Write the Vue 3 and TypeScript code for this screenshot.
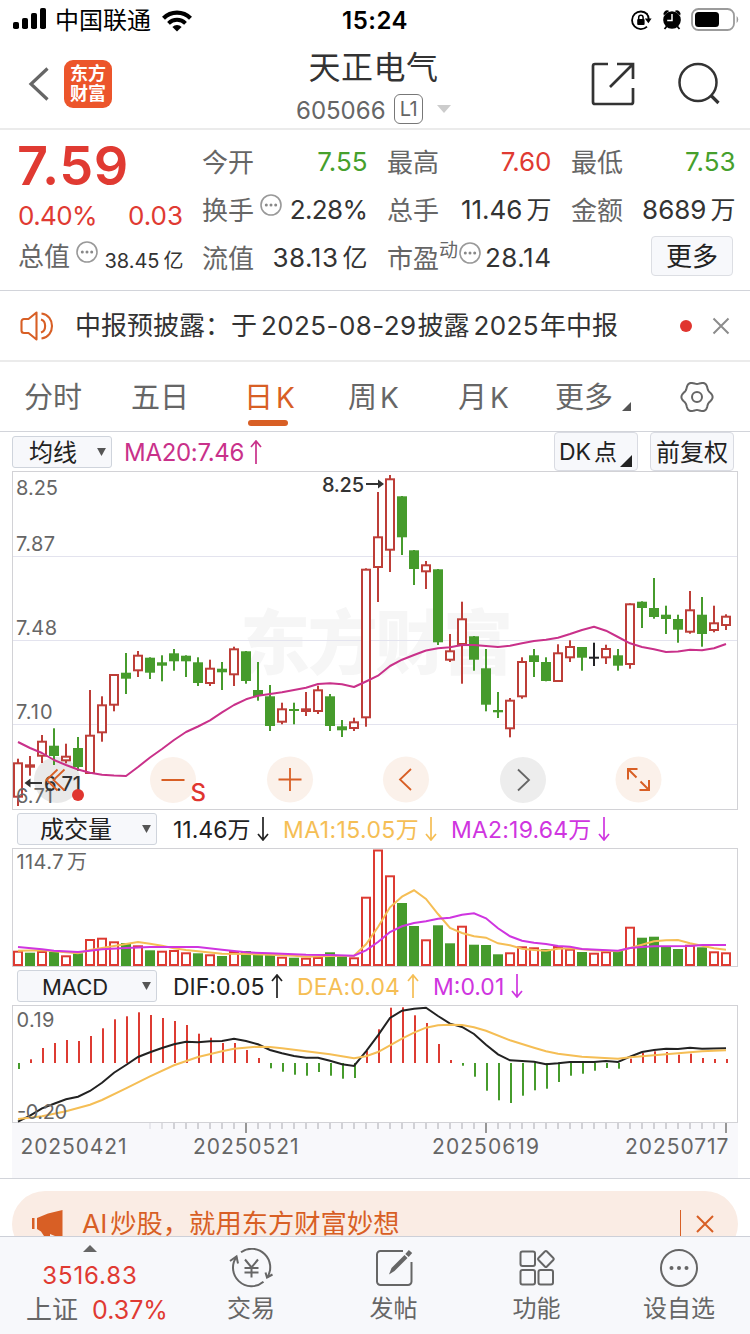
<script setup lang="ts">
type Tone = 'r' | 'g' | 'k'
// high, body top, body bottom, low, tone, in canvas units
type Candle = [number, number, number, number, Tone]

const x = (i: number): number => 18 + 12 * i

const candles: Candle[] = [
  [758.7, 762.3, 797.7, 806, 'r'], [756, 764.3, 767.7, 775.7, 'r'], [735, 740.7, 756.7, 763, 'r'],
  [728.3, 745.7, 756, 765, 'g'], [743.7, 755.7, 761.3, 763.3, 'r'], [737, 748, 767, 771, 'g'],
  [690, 734.7, 774, 774, 'r'], [696.3, 704.3, 733.3, 741.7, 'r'], [674, 674, 705.7, 711.3, 'r'],
  [653, 672.7, 678.7, 694, 'g'], [651, 654.7, 671.3, 677, 'r'], [657.3, 657.7, 672.7, 679, 'g'],
  [655.3, 662.3, 665.7, 681.3, 'g'], [649, 653.3, 661.3, 670.7, 'g'], [655.3, 655.7, 661.3, 677, 'g'],
  [657.3, 662.3, 683, 686, 'g'], [659.7, 667.7, 684, 686, 'r'], [662, 668.7, 672.3, 690, 'g'],
  [646.7, 648.3, 675.3, 686, 'r'], [651, 651.3, 681, 683.7, 'g'], [662, 690, 696, 700.7, 'g'],
  [685, 696.3, 726, 731, 'g'], [702.7, 708.3, 722.7, 724.3, 'r'], [702.7, 709, 711, 724.3, 'g'],
  [692, 708.3, 712, 716, 'r'], [685.7, 689.3, 712, 714, 'r'], [694, 696.3, 726, 731, 'g'],
  [720, 726.3, 730.3, 737, 'g'], [717.7, 721.3, 729, 731, 'r'], [568.3, 568.7, 718.3, 726.7, 'r'],
  [492, 536.3, 568, 602, 'r'], [475, 478.3, 550.7, 572, 'r'], [496, 496.3, 537.3, 555, 'g'],
  [550, 550.3, 569, 585, 'g'], [561, 564.3, 572.3, 589, 'r'], [569, 569.3, 642.3, 645, 'g'],
  [634, 650.3, 660.7, 662, 'r'], [601.7, 618.3, 645, 683.7, 'r'], [636, 636.3, 659.7, 670.7, 'g'],
  [649, 668.3, 704.7, 711.3, 'g'], [692, 710, 712.3, 718, 'g'], [698, 699.7, 729.3, 737.3, 'r'],
  [657.3, 661, 697.3, 698.7, 'r'], [649, 655.3, 662, 677, 'g'], [657.3, 662, 681, 681.3, 'g'],
  [644.3, 652.3, 682, 682, 'r'], [640.3, 646, 658.3, 662, 'r'], [647, 647, 657.7, 670.7, 'g'],
  [642.7, 656.7, 658.7, 666, 'k'], [644.7, 648, 658.3, 664, 'r'], [649, 655.3, 665.7, 670.7, 'g'],
  [603.3, 603.3, 665, 668.7, 'r'], [601.3, 601.7, 608, 628, 'g'], [578, 608, 617, 618.7, 'g'],
  [605.7, 614.7, 619, 634, 'g'], [614.7, 619, 629.7, 642.7, 'g'], [591, 609.3, 632.7, 633.7, 'r'],
  [597, 614.7, 634, 646.7, 'g'], [605.7, 622.3, 631, 632.3, 'r'], [614.3, 615.7, 626, 630, 'r'],
]

const priceColor: Record<Tone, string> = { r: '#bd3e38', g: '#469b2c', k: '#222226' }
const isHollow = (c: Candle): boolean => c[4] === 'r' && c[2] - c[1] > 5

const ma20 = [
  742, 748, 753, 760, 765, 769.5, 772.7, 774.7, 775.5, 776, 767, 757.5, 749, 740, 732, 726.5, 720.3, 712.3, 705,
  699.3, 695.7, 694, 692.3, 690, 687.7, 684, 683.3, 684.3, 687, 681.5, 675.7, 666, 659.7, 655, 650.5, 648.3, 647.3,
  645, 645, 646, 647, 645.7, 643.3, 641, 639.7, 637.7, 634, 630, 626.7, 630.7, 637, 643.3, 647, 649.3, 652, 651.5,
  649.7, 650.3, 648.3, 644,
]
const ma20Line = ma20.map((y, i) => `${x(i)},${y}`).join(' ')

const volumeTops = [
  950.7, 952.7, 951, 951.7, 955.3, 953.3, 939, 937.7, 941.3, 943, 945.3, 950.3, 950.7, 950, 952.3, 953.3, 954.3, 956,
  951, 951, 953.7, 954.3, 956.7, 957.7, 957.7, 957, 952.3, 956, 957.3, 896.7, 849.5, 875.3, 903, 926, 939.3, 925.3,
  943.3, 925.7, 944.7, 945, 954.3, 952.3, 946.3, 947.3, 949, 946, 948.7, 952, 952.7, 951.3, 951, 926.7, 937.7, 936.7,
  946.3, 949, 944.7, 947.3, 951.3, 952.3,
]
const volumeTones = 'rgrgrgrrrgrgrrrgrgrgggrgrrggrrrrggrggrgggrrrgrrgrrgrggggrgrr'

const volMa1 =
  '18,950.7 42,950.3 78,953.3 90,950 102,948 114,946 126,944 138,942 150,943.7 162,945.7 174,948.3 186,950 198,951.3 222,953.7 246,954 270,954.7 294,955.7 306,956.7 330,956 354,955.7 366,944.3 378,927 390,907.3 402,896.7 414,890.3 426,899 438,914 450,928 462,933 474,936.3 486,937.7 498,943.3 510,945.3 522,948.7 534,950 546,950.7 558,948.7 570,948.3 594,950.3 618,951.3 630,948 642,944.7 654,941.3 666,940.3 678,940 690,943.3 702,945.7 714,948.3 726,949.7'
const volMa2 =
  '18,947 42,949.3 54,950.7 78,952 90,950.7 102,949.3 126,948 150,947 198,947 222,949.7 246,952.3 270,953.3 306,954.7 330,955 354,955.7 366,950.3 378,942 390,932 402,926.3 414,923 426,921.3 438,918.7 450,917.7 462,914.7 474,913.3 486,918.3 498,928.3 510,936.3 522,940.7 534,942.7 546,944 558,946 570,946.7 582,949 618,950.7 630,948 642,947 654,946.3 690,946 702,945 726,945'

const macdEnds = [
  1069, 1059.3, 1048, 1043, 1040, 1041, 1036, 1028.3, 1019.3, 1016.3, 1012.3, 1015, 1018, 1021, 1025, 1033.7, 1037.7,
  1043, 1043, 1050, 1058, 1068.3, 1071.7, 1074.7, 1075.7, 1072, 1075.7, 1078.7, 1078, 1051, 1029.3, 1007.7, 1007.3,
  1015.3, 1023, 1044, 1060, 1065.7, 1076.7, 1090.7, 1100.3, 1103, 1095.7, 1090.3, 1088.7, 1082, 1075.7, 1073.7, 1070.7,
  1068, 1068.7, 1058.7, 1053, 1051.3, 1052, 1054.7, 1053.7, 1058, 1059, 1059,
]
const difLine =
  '18,1121.7 30,1115.7 42,1108.3 54,1103.7 66,1099.3 78,1096.7 90,1091 102,1082.7 114,1072.7 126,1065 138,1057 150,1052.3 162,1048 174,1044.3 186,1041.7 198,1042.3 210,1041.3 222,1041 234,1038.7 246,1041 258,1044.3 270,1050 282,1053.3 294,1056 306,1057.7 318,1057.7 330,1060.7 342,1064.3 354,1066 366,1051.3 378,1035.3 390,1018 402,1010.7 414,1008.7 426,1007.7 438,1016 450,1023.7 462,1027 474,1034 486,1044.7 498,1054.3 510,1060.3 534,1061.7 546,1064.3 558,1063.3 570,1062 594,1062 606,1061 618,1062 630,1056.7 642,1052 654,1050 666,1048.7 678,1049 690,1047.7 702,1048.7 726,1048.3'
const deaLine =
  '18,1119 42,1116.3 66,1111.3 90,1104.7 102,1100 126,1088.3 150,1076.3 174,1065.3 198,1057 222,1051.3 234,1048.7 258,1046.7 270,1047 282,1048.3 306,1051.3 330,1054.3 342,1056.3 354,1058.3 366,1056.3 378,1052 390,1045.3 402,1038.7 414,1032.7 426,1027.7 438,1025.3 450,1024.7 462,1025 474,1027.3 486,1030.7 510,1040.3 534,1047.7 546,1051.3 558,1053.7 582,1056.7 618,1058.7 630,1057.3 666,1054.3 702,1051.3 726,1050.3'

const ticks = Array.from({ length: 49 }, (_, k) => {
  const i = k + 11
  return { x: x(i), major: i === 19 || i === 39 || i === 59, opacity: i === 11 ? 0.4 : i === 12 ? 0.7 : 1 }
})

const gear =
  Array.from({ length: 72 }, (_, k) => {
    const a = (k * Math.PI) / 36
    const r = 14.3 + 1.3 * Math.cos(6 * a)
    return `${k ? 'L' : 'M'}${(17 + r * Math.cos(a)).toFixed(2)} ${(17 + r * Math.sin(a)).toFixed(2)}`
  }).join('') + 'Z'
</script>

<template>
  <div class="screen">
    <div class="status">
      <svg class="signal" width="34" height="24" viewBox="0 0 34 24">
        <rect x="0" y="15" width="6" height="7" rx="1.8" />
        <rect x="9" y="11" width="6" height="11" rx="1.8" />
        <rect x="18" y="6" width="6" height="16" rx="1.8" />
        <rect x="27" y="1" width="6" height="21" rx="1.8" />
      </svg>
      <span class="carrier">中国联通</span>
      <svg class="wifi" width="30" height="22" viewBox="0 0 30 22">
        <path d="M1.500 8.200a19.200 19.200 0 0 1 27 0" fill="none" stroke="#000" stroke-width="4.200" />
        <path d="M6.500 13.300a12 12 0 0 1 17 0" fill="none" stroke="#000" stroke-width="3.800" />
        <path d="M15 21.500l-4.600-4.600a6.600 6.600 0 0 1 9.200 0z" />
      </svg>
      <span class="clock">15:24</span>
      <svg class="sys" width="110" height="26" viewBox="630 8 110 26">
        <g transform="translate(-1 0)">
          <path d="M648.200 14.200A8.800 8.800 0 1 0 648 26.600" fill="none" stroke="#000" stroke-width="1.800" />
          <path d="M647.400 13.400a8.800 8.800 0 0 1 2.400 6" fill="none" stroke="#000" stroke-width="1.800" />
          <path d="M645.800 18.600h6.800l-3.200 4.600z" />
          <rect x="638.200" y="19" width="7.400" height="6" rx="1" />
          <path d="M639.700 19.500v-2a2.200 2.200 0 0 1 4.400 0v2" fill="none" stroke="#000" stroke-width="1.500" />
        </g>
        <circle cx="672" cy="20" r="8.800" />
        <path d="M663.800 15.500a3.600 3.600 0 0 1 5.400-4.400zM680.200 15.500a3.600 3.600 0 0 0-5.400-4.400z" />
        <path d="M667 26l-2.500 3M677 26l2.500 3" stroke="#000" stroke-width="1.800" />
        <path d="M672 14v6.500h-4.800" fill="none" stroke="#fff" stroke-width="1.500" />
        <rect x="692" y="9" width="42" height="21" rx="6.500" fill="none" stroke="#9b9b9b" stroke-width="1.800" />
        <rect x="695" y="12" width="24" height="15" rx="3.500" />
        <path d="M736.600 16a4.800 4.800 0 0 1 0 7.200z" fill="#9b9b9b" />
      </svg>
    </div>

    <header class="header">
      <svg class="back" width="22" height="36" viewBox="0 0 22 36">
        <path d="M20.500 2.500L4 18l16.500 15.500" fill="none" stroke="#666" stroke-width="3.200" />
      </svg>
      <div class="logo"><span>东方</span><span>财富</span></div>
      <div class="title">
        <h1>天正电气</h1>
        <div class="code">
          <span>605066</span><b>L1</b>
          <svg width="14" height="8" viewBox="0 0 14 8"><path d="M0 0h14L7 8z" fill="#ccc" /></svg>
        </div>
      </div>
      <svg class="share" width="44" height="44" viewBox="0 0 44 44">
        <path d="M17 2H4a2 2 0 0 0-2 2v36a2 2 0 0 0 2 2h36a2 2 0 0 0 2-2V26M42 17V2H26M41 3L19 25" fill="none" stroke="#333" stroke-width="2.700" />
      </svg>
      <svg class="search" width="44" height="44" viewBox="0 0 44 44">
        <circle cx="21" cy="20.500" r="18.500" fill="none" stroke="#333" stroke-width="2.500" />
        <path d="M34 33.500l7.500 7.500" stroke="#333" stroke-width="3.200" />
      </svg>
    </header>

    <section class="quote">
      <div class="main">
        <div class="price">7.59</div>
        <div class="change"><span class="pct">0.40%</span><span>0.03</span></div>
        <div class="pair cap">
          <label>总值</label>
          <svg class="info" width="22" height="22" viewBox="0 0 22 22"><circle class="ring" cx="11" cy="11" r="10" /><circle cx="6.300" cy="11" r="1.500" /><circle cx="11" cy="11" r="1.500" /><circle cx="15.700" cy="11" r="1.500" /></svg>
          <span class="small">38.45<i>亿</i></span>
        </div>
      </div>
      <div class="cells">
        <div class="pair"><label>今开</label><span class="green">7.55</span></div>
        <div class="pair"><label>最高</label><span class="red">7.60</span></div>
        <div class="pair"><label>最低</label><span class="green">7.53</span></div>
        <div class="pair">
          <label>换手</label>
          <svg class="info" width="22" height="22" viewBox="0 0 22 22"><circle class="ring" cx="11" cy="11" r="10" /><circle cx="6.300" cy="11" r="1.500" /><circle cx="11" cy="11" r="1.500" /><circle cx="15.700" cy="11" r="1.500" /></svg>
          <span class="pct">2.28%</span>
        </div>
        <div class="pair"><label>总手</label><span>11.46<i>万</i></span></div>
        <div class="pair"><label>金额</label><span>8689<i>万</i></span></div>
        <div class="pair"><label>流值</label><span class="wide">38.13<i>亿</i></span></div>
        <div class="pair pe">
          <label>市盈</label><em>动</em>
          <svg class="info" width="22" height="22" viewBox="0 0 22 22"><circle class="ring" cx="11" cy="11" r="10" /><circle cx="6.300" cy="11" r="1.500" /><circle cx="11" cy="11" r="1.500" /><circle cx="15.700" cy="11" r="1.500" /></svg>
          <span class="wide">28.14</span>
        </div>
        <div class="pair"><button class="more">更多</button></div>
      </div>
    </section>

    <section class="notice">
      <svg width="36" height="32" viewBox="0 0 36 32" fill="none" stroke="#d85f25" stroke-width="2.100">
        <path d="M17.500 2.500v27L9.500 23H5a2.500 2.500 0 0 1-2.500-2.500v-9A2.500 2.500 0 0 1 5 9h4.500z" stroke-linejoin="round" />
        <path d="M22 9.500c5.500 1.500 5.500 11.500 0 13M22.500 3.500c14 2 14 23 0 25" />
      </svg>
      <p>中报预披露：于<s>2025-08-29</s>披露<s>2025</s>年中报</p>
      <span class="dot"></span>
      <svg class="close" width="18" height="18" viewBox="0 0 18 18"><path d="M1.500 1.500l15 15M16.500 1.500l-15 15" stroke="#8c8c8c" stroke-width="2" /></svg>
    </section>

    <nav class="tabs">
      <span>分时</span>
      <span>五日</span>
      <span class="active">日<u>K</u></span>
      <span>周<u>K</u></span>
      <span>月<u>K</u></span>
      <span class="drop">更多<svg width="9" height="9" viewBox="0 0 9 9"><path d="M9 0v9H0z" fill="#555" /></svg></span>
      <svg class="gear" width="34" height="34" viewBox="0 0 34 34" fill="none" stroke="#666" stroke-width="2">
        <path :d="gear" stroke-linejoin="round" />
        <circle cx="17" cy="17" r="5" />
      </svg>
    </nav>

    <div class="bar bar-ma">
      <div class="select s1"><span>均线</span><svg width="9" height="8" viewBox="0 0 10 9"><path d="M0 0h10L5 9z" fill="#555" /></svg></div>
      <span class="ma">MA20:7.46</span>
      <svg class="arr a1" width="12" height="24" viewBox="0 0 12 24" stroke="#c9318a"><path d="M6 24V1M1 7l5-6 5 6" /></svg>
      <div class="chip dk"><span>DK<i>点</i></span><svg width="12" height="12" viewBox="0 0 12 12"><path d="M12 0v12H0z" fill="#222" /></svg></div>
      <div class="chip"><span>前复权</span></div>
    </div>

    <svg class="panel" width="726" height="339" viewBox="12 471 726 339">
      <text class="wm" x="240" y="669" textLength="273">东方财富</text>
      <g stroke="#e3e3ee" stroke-width="1"><path d="M12 556.500H738M12 640.500H738M12 724.500H738" /></g>
      <rect x="12.500" y="471.500" width="725" height="338" fill="none" stroke="#d2d2d6" />
      <g fill="#fbf1ea">
        <circle cx="57" cy="780" r="23" fill="#e9e9e9" />
        <circle cx="173" cy="780" r="23" />
        <circle cx="290" cy="779.500" r="23" />
        <circle cx="406" cy="779.500" r="23" />
        <circle cx="523" cy="780" r="23" fill="#ededed" />
        <circle cx="638.500" cy="779.500" r="23" />
      </g>
      <g v-for="(c, i) in candles" :key="i" :fill="priceColor[c[4]]">
        <rect :x="x(i) - 1" :y="c[0]" width="2" :height="c[3] - c[0]" />
        <rect :x="x(i) - 5" :y="c[1]" width="10" :height="c[2] - c[1]" />
        <rect v-if="isHollow(c)" :x="x(i) - 3" :y="c[1] + 2" width="6" :height="c[2] - c[1] - 4" fill="#fff" />
      </g>
      <polyline :points="ma20Line" fill="none" stroke="#c9318a" stroke-width="2" stroke-linejoin="round" />
      <g class="axis">
        <text x="16" y="494.500" textLength="42">8.25</text>
        <text x="16" y="550.500" textLength="39">7.87</text>
        <text x="16" y="634.500" textLength="41">7.48</text>
        <text x="16" y="718.500" textLength="36.500">7.10</text>
        <text x="16" y="803" textLength="37">6.71</text>
      </g>
      <text class="mark" x="322" y="492" textLength="42">8.25</text>
      <path d="M366 484h12" stroke="#333" stroke-width="2" /><path d="M378 479.500l6 4.500-6 4.500z" fill="#333" />
      <text class="mark" x="44" y="790.500" textLength="37">6.71</text>
      <path d="M30 783h12" stroke="#333" stroke-width="2" /><path d="M30.500 778.500l-6 4.500 6 4.500z" fill="#333" />
      <g fill="none" stroke="#d85f25" stroke-width="1.800">
        <path d="M57.500 769.500L46.500 780l11 10.500M64.500 769.500L53.500 780l11 10.500" />
        <path d="M161.500 780h23M278.500 779.500h23M290 768v23" />
        <path d="M411 769l-11 10.500 11 10.500" />
        <path d="M518 769.500l11 10.500-11 10.500" stroke="#666" />
        <path d="M628 779.500V769h9.500M628.500 769.500l8 8M639.500 790H649v-10M648.500 789.500l-8-8" stroke-width="2" />
      </g>
      <circle cx="78" cy="795" r="6" fill="#e0352f" />
      <text class="s" x="190.500" y="800.500" textLength="14">S</text>
    </svg>

    <div class="bar bar-vol">
      <div class="select s2"><span>成交量</span><svg width="9" height="8" viewBox="0 0 10 9"><path d="M0 0h10L5 9z" fill="#555" /></svg></div>
      <span class="v0">11.46万</span>
      <svg class="arr" width="12" height="24" viewBox="0 0 12 24" stroke="#222"><path d="M6 0v23M1 17l5 6 5-6" /></svg>
      <span class="v1">MA1:15.05万</span>
      <svg class="arr" width="12" height="24" viewBox="0 0 12 24" stroke="#f5be55"><path d="M6 0v23M1 17l5 6 5-6" /></svg>
      <span class="v2">MA2:19.64万</span>
      <svg class="arr" width="12" height="24" viewBox="0 0 12 24" stroke="#cf35e0"><path d="M6 0v23M1 17l5 6 5-6" /></svg>
    </div>

    <svg class="panel" width="726" height="119" viewBox="12 848 726 119">
      <rect x="12.500" y="848.500" width="725" height="118" fill="none" stroke="#d2d2d6" />
      <g v-for="(top, i) in volumeTops" :key="i">
        <rect :x="x(i) - 5" :y="top" width="10" :height="966 - top" :fill="volumeTones[i] === 'r' ? '#dd3b32' : '#469b2c'" />
        <rect v-if="volumeTones[i] === 'r'" :x="x(i) - 3" :y="top + 2" width="6" :height="962 - top" fill="#fff" />
      </g>
      <polyline :points="volMa1" fill="none" stroke="#f5be55" stroke-width="2" />
      <polyline :points="volMa2" fill="none" stroke="#cf35e0" stroke-width="2" />
      <g class="axis"><text x="16.500" y="869" textLength="47">114.7</text><text x="67" y="869" textLength="20">万</text></g>
    </svg>

    <div class="bar bar-macd">
      <div class="select s2 s3"><span>MACD</span><svg width="9" height="8" viewBox="0 0 10 9"><path d="M0 0h10L5 9z" fill="#555" /></svg></div>
      <span class="d0">DIF:0.05</span>
      <svg class="arr" width="12" height="24" viewBox="0 0 12 24" stroke="#222"><path d="M6 24V1M1 7l5-6 5 6" /></svg>
      <span class="d1">DEA:0.04</span>
      <svg class="arr" width="12" height="24" viewBox="0 0 12 24" stroke="#f5be55"><path d="M6 24V1M1 7l5-6 5 6" /></svg>
      <span class="d2">M:0.01</span>
      <svg class="arr" width="12" height="24" viewBox="0 0 12 24" stroke="#cf35e0"><path d="M6 0v23M1 17l5 6 5-6" /></svg>
    </div>

    <svg class="panel" width="726" height="173" viewBox="12 1005 726 173">
      <rect x="12" y="1123" width="726" height="56" fill="#f8f8fb" />
      <rect x="12.500" y="1005.500" width="725" height="117" fill="none" stroke="#d2d2d6" />
      <g v-for="(end, i) in macdEnds" :key="i">
        <rect :x="x(i)" :y="Math.min(end, 1063)" width="2" :height="Math.abs(1063 - end)" :fill="end < 1063 ? '#dd3b32' : '#469b2c'" />
      </g>
      <polyline :points="difLine" fill="none" stroke="#222" stroke-width="2" />
      <polyline :points="deaLine" fill="none" stroke="#f5be55" stroke-width="2" />
      <rect v-for="t in ticks" :key="t.x" :x="t.x - 0.750" y="1123" width="1.500" :height="t.major ? 10 : 6" :fill="t.major ? '#777' : '#c4c4ca'" :opacity="t.opacity" />
      <g class="axis">
        <text x="16.500" y="1026.500" textLength="38">0.19</text>
        <text x="17" y="1119" textLength="50">-0.20</text>
      </g>
      <g class="axis dates">
        <text x="20.500" y="1154" textLength="106">20250421</text>
        <text x="193" y="1154" textLength="105.500">20250521</text>
        <text x="432" y="1154" textLength="107">20250619</text>
        <text x="625" y="1154" textLength="103.500">20250717</text>
      </g>
    </svg>

    <div class="promo-wrap">
      <div class="promo">
        <svg width="32" height="30" viewBox="0 0 32 30" fill="#d85f25">
          <rect x="0" y="9" width="2.500" height="11" /><path d="M5 9l11-4.500L30.500 1v29L18 25v2h-6l-3-4.500L5 20z" />
        </svg>
        <p><s>AI</s>炒股，就用东方财富妙想</p>
        <span class="sep"></span>
        <svg class="close" width="18" height="18" viewBox="0 0 18 18"><path d="M1 1l16 16M17 1L1 17" stroke="#d85f25" stroke-width="2" /></svg>
      </div>
    </div>

    <footer class="foot">
      <div class="index">
        <svg width="14" height="7" viewBox="0 0 14 7"><path d="M7 0l7 7H0z" fill="#666" /></svg>
        <strong class="point">3516.83</strong>
        <div class="sz"><span>上证</span><strong>0.37%</strong></div>
      </div>
      <div class="item">
        <svg width="44" height="40" viewBox="229 1248 44 40" fill="none" stroke="#666" stroke-width="2">
          <path d="M241 1252.200A18.500 18.500 0 0 1 267.200 1277.400M236.800 1256.500A18.500 18.500 0 0 0 263.500 1281.800" />
          <path d="M230 1261l6.500-4.500 1.500 7M272.500 1274.500l-5.500 3-1.500-5" />
          <path d="M245 1259.500l6.500 8 6.500-8M251.500 1267.500v10M244.500 1268h14M244.500 1272.500h14" />
        </svg>
        <span>交易</span>
      </div>
      <div class="item">
        <svg width="40" height="40" viewBox="374 1248 40 40" fill="none" stroke="#666" stroke-width="2">
          <path d="M403 1251H380.500a3.500 3.500 0 0 0-3.500 3.500v27a3.500 3.500 0 0 0 3.500 3.500h27.500a3.500 3.500 0 0 0 3.500-3.500V1262" />
          <path d="M389 1274.500l2.500-6.500 13-13 3 3-13 13z" fill="#666" stroke="none" />
          <path d="M407 1255.500l3.500-4" stroke-width="4.500" />
        </svg>
        <span>发帖</span>
      </div>
      <div class="item">
        <svg width="40" height="40" viewBox="517 1248 40 40" fill="none" stroke="#666" stroke-width="2">
          <rect x="520.500" y="1251.500" width="14.500" height="14.500" rx="2" />
          <rect x="520.500" y="1270" width="14.500" height="14.500" rx="2" />
          <rect x="538.500" y="1270" width="14.500" height="14.500" rx="2" />
          <rect x="539.900" y="1253" width="12" height="12" rx="1.500" transform="rotate(45 545.900 1259)" />
        </svg>
        <span>功能</span>
      </div>
      <div class="item">
        <svg width="40" height="40" viewBox="0 0 40 40" fill="#666">
          <circle cx="20" cy="20" r="18" fill="none" stroke="#666" stroke-width="2" />
          <circle cx="12.500" cy="20" r="2" /><circle cx="20" cy="20" r="2" /><circle cx="27.500" cy="20" r="2" />
        </svg>
        <span>设自选</span>
      </div>
    </footer>
  </div>
</template>

<style>
body { background: #fff; }
</style>

<style scoped>
* { box-sizing: border-box; margin: 0; padding: 0; }
svg { display: block; flex: none; }
i, em { font-style: normal; }
u, s { text-decoration: none; }
span, p, label { white-space: nowrap; }
.screen { width: 750px; height: 1334px; overflow: hidden; display: flex; flex-direction: column; background: #fff; color: #333; font-family: Inter, "Noto Sans CJK SC", sans-serif; font-size: 26px; line-height: 1; }
.screen > * { flex: none; }

.status { height: 40px; position: relative; display: flex; align-items: center; padding-left: 13px; color: #000; }
.signal { margin-top: -2px; }
.carrier { font-size: 24px; margin: 2px 0 0 8px; width: 100px; }
.wifi { margin-left: 7px; margin-top: 1px; }
.clock { position: absolute; left: 0; right: 0; top: 9px; text-align: center; font-size: 24px; font-weight: 600; letter-spacing: 0.500px; }
.sys { margin-left: auto; margin-right: 10px; margin-top: 2px; }

.header { height: 90px; border-bottom: 2px solid #ebebeb; display: flex; align-items: flex-start; }
.back { margin: 26px 0 0 27px; }
.logo { width: 48px; height: 48px; margin: 20px 0 0 15px; border-radius: 9px; background: #ec552b; color: #fff; font-size: 18px; font-weight: 700; display: flex; flex-direction: column; align-items: center; justify-content: center; gap: 2px; }
.title { width: 300px; margin-left: 112px; }
h1 { font-weight: 400; font-size: 32px; letter-spacing: 0.500px; text-align: center; margin: 12px 0 0 -1px; }
.code { display: flex; align-items: center; margin: 10px 0 0 72px; height: 30px; color: #666; font-size: 24px; }
.code span { letter-spacing: 0; width: 90px; margin-top: 3px; }
.code b { font-weight: 400; font-size: 20px; border: 1.500px solid #777; border-radius: 6px; width: 29px; height: 30px; line-height: 29px; text-align: center; margin-left: 8px; letter-spacing: -0.500px; }
.code svg { margin-left: 14px; }
.share { margin: 22px 0 0 67px; }
.search { margin: 22px 0 0 42px; }

.quote { height: 161px; border-bottom: 1px solid #d2d4da; display: flex; padding-left: 18px; }
.main { width: 165px; margin-right: 19px; }
.price { color: #e03a32; font-size: 54px; font-weight: 600; line-height: 54px; margin-top: 9px; letter-spacing: 0.600px; margin-left: -1px; }
.change { color: #e03a32; display: flex; justify-content: space-between; margin-top: 10px; font-size: 26px; }
.pct { letter-spacing: -0.600px; }
.wide { letter-spacing: 0.500px; }
.pair { display: flex; align-items: center; height: 48px; }
.pair > span:last-child { margin-left: auto; margin-right: -0.500px; }
.pair i { margin-left: 4px; font-size: 25px; letter-spacing: 0; }
label { color: #666; width: 52px; margin-top: 1px; }
.cap { margin-top: 4px; }
.cap label { margin-top: -1px; }
.info { margin: -10px 0 0 6px; fill: #888; }
.info .ring { fill: none; stroke: #999; stroke-width: 1.600; }
.small { font-size: 20px; margin-top: 7px; }
.small i { font-size: 20px; }
.cells { display: grid; grid-template-columns: 165px 164px 164px; column-gap: 20px; grid-auto-rows: 48px; margin-top: 8px; }
.green { color: #46a02c; }
.red { color: #e03a32; }
.pe em { color: #666; font-size: 19px; margin: -16px 0 0 0; }
.pe .info { margin-left: 1px; }
.more { margin-left: auto; margin-right: 2px; width: 82px; height: 40px; margin-top: -4px; border: 1.500px solid #dcdee3; border-radius: 4px; background: #f7f8fb; font: inherit; color: #222; text-align: center; line-height: 39px; }

.notice { height: 71px; border-bottom: 2px solid #ebebeb; display: flex; align-items: center; padding-left: 19px; }
.notice p { margin-left: 20px; width: 605px; font-size: 26px; color: #333; }
.notice s { letter-spacing: 0.400px; margin: 0 1px 0 4px; }
.notice .dot { width: 12px; height: 12px; border-radius: 50%; background: #e0352f; }
.notice .close { margin-left: 20px; }

.tabs { height: 70px; border-bottom: 1px solid #d2d4da; display: grid; grid-template-columns: 107px 113px 104px 110px 97px 125px 34px; padding-left: 24px; align-items: center; font-size: 29px; color: #666; }
.tabs > span { position: relative; top: 1px; }
.tabs u { margin-left: 3px; font-size: 28px; }
.tabs .active { color: #d85f25; }
.active::after { content: ""; position: absolute; left: 4px; top: 37px; width: 40px; height: 6px; border-radius: 3px; background: #d85f25; }
.drop { display: flex; align-items: center; }
.drop svg { margin: 18px 0 0 9px; }

.bar { display: flex; align-items: center; font-size: 24px; }
.bar span { padding-top: 2px; }
.bar-ma { height: 39px; padding: 0 16px 0 12px; }
.bar-vol { height: 38px; padding-left: 17px; }
.bar-macd { height: 38px; padding-left: 17px; }
.select { display: flex; align-items: center; justify-content: space-between; height: 32px; border: 1px solid #cfd4dc; border-radius: 3px; background: #f7f8fb; color: #222; }
.s1 { width: 100px; padding: 0 5px 0 16px; }
.s2 { width: 140px; padding: 0 5px 0 22px; }
.s3 { padding-left: 24px; font-size: 22px; }
.ma { color: #c9318a; margin-left: 12px; width: 121px; letter-spacing: -0.300px; }
.arr { fill: none; stroke-width: 1.700; }
.a1 { margin-left: 5px; margin-right: auto; }
.chip { position: relative; width: 84px; height: 39px; border: 1.500px solid #d9dbe2; border-radius: 4px; background: #f7f8fb; display: flex; align-items: center; justify-content: center; color: #222; margin-left: 12px; }
.dk { justify-content: flex-start; padding-left: 4px; font-size: 23px; }
.dk i { margin-left: 3px; }
.dk svg { position: absolute; right: 5px; bottom: 3px; }
.v0 { margin-left: 16px; width: 79px; color: #222; }
.v0, .v1, .v2 { font-size: 23px; }
.v0 + .arr { margin-left: 5px; }
.v1 { margin-left: 14px; width: 136px; color: #f5be55; letter-spacing: 0.400px; }
.v1 + .arr { margin-left: 6px; }
.v2 { margin-left: 14px; width: 142px; color: #cf35e0; letter-spacing: 0.200px; }
.v2 + .arr { margin-left: 5px; }
.d0, .d1, .d2 { font-size: 23px; }
.d0 { margin-left: 16px; width: 93px; color: #222; }
.d0 + .arr { margin-left: 5px; }
.d1 { margin-left: 14px; width: 105px; color: #f5be55; letter-spacing: 0.100px; }
.d1 + .arr { margin-left: 5px; }
.d2 { margin-left: 14px; width: 73px; color: #cf35e0; }
.d2 + .arr { margin-left: 5px; }

.panel { margin-left: 12px; }
.wm { font-size: 70px; font-weight: 900; fill: #f6f6f6; }
.axis { font-size: 20px; fill: #666; }
.dates { font-size: 21px; }
.mark { font-size: 20px; font-weight: 500; fill: #333; }
.s { font-size: 24px; font-weight: 500; fill: #e0352f; }

.promo-wrap { height: 58px; border-top: 1px solid #d2d4da; padding: 12px 12px 0; overflow: hidden; }
.promo { height: 66px; border-radius: 33px; background: #faece4; color: #d85f25; display: flex; align-items: center; padding-left: 20px; }
.promo p { margin-left: 18px; width: 598px; font-size: 26.300px; }
.promo s { margin-right: 3px; }
.promo .sep { width: 1px; height: 40px; margin-top: 12px; background: #d85f25; }
.promo .close { margin-left: 15px; }

.foot { height: 98px; border-top: 1px solid #cdd0d8; background: #f7f8fb; display: grid; grid-template-columns: 180px 142px 143px 143px 142px; color: #666; }
.index { display: flex; flex-direction: column; align-items: center; padding-top: 8px; }
.index strong { font-weight: 400; color: #e03a32; font-size: 24px; margin-top: 12px; }
.index .point { letter-spacing: 0.900px; }
.sz { display: flex; align-items: center; gap: 14px; margin-left: 14px; margin-top: 9px; font-size: 26px; }
.sz strong { margin-top: 0; font-size: 25px; }
.item { display: flex; flex-direction: column; align-items: center; padding-top: 11px; font-size: 24px; }
.item span { margin-top: 9px; }
</style>
